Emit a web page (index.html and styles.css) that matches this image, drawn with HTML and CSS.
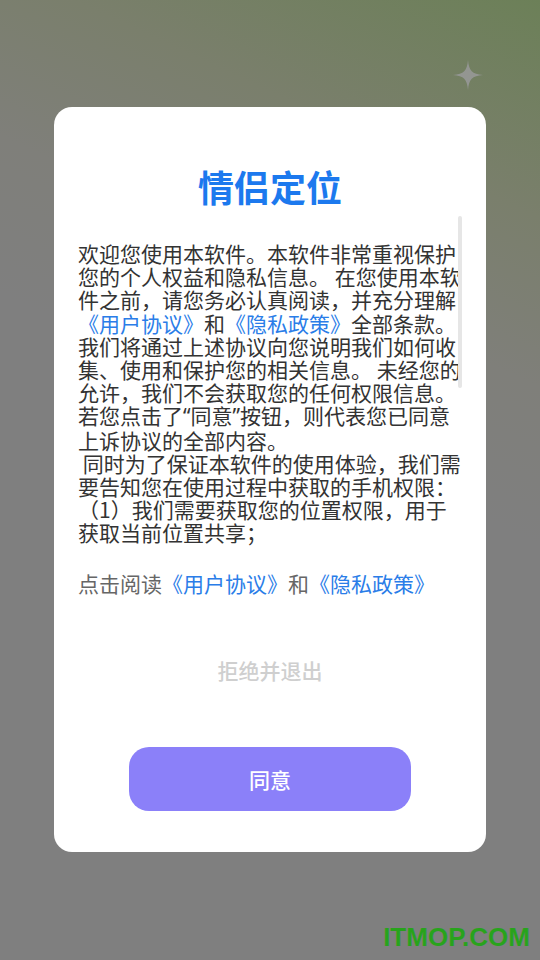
FILE: index.html
```html
<!DOCTYPE html>
<html lang="zh-CN">
<head>
    <meta charset="UTF-8">
    <meta name="viewport" content="width=device-width, initial-scale=1.0">
    <title>情侣定位</title>
    <link rel="stylesheet" href="styles.css">
</head>
<body>
    <div class="bg-star">
        <svg width="30" height="30" viewBox="0 0 30 30"><path d="M15 0 C16 11 19 14 30 15 C19 16 16 19 15 30 C14 19 11 16 0 15 C11 14 14 11 15 0 Z" fill="#9b9b9e" opacity="0.8"/></svg>
    </div>

    <div class="dialog">
        <h2 class="dialog-title">情侣定位</h2>

        <div class="policy-box">
            <div class="policy-text">欢迎您使用本软件。本软件非常重视保护您的个人权益和隐私信息。 在您使用本软件之前，请您务必认真阅读，并充分理解<a class="link">《用户协议》</a>和<a class="link">《隐私政策》</a>全部条款。我们将通过上述协议向您说明我们如何收集、使用和保护您的相关信息。 未经您的允许，我们不会获取您的任何权限信息。若您点击了<span class="quote">“</span>同意<span class="quote">”</span>按钮，则代表您已同意上诉协议的全部内容。<br>&nbsp;同时为了保证本软件的使用体验，我们需要告知您在使用过程中获取的手机权限：<br>（1）我们需要获取您的位置权限，用于获取当前位置共享；</div>
            <div class="scroll-thumb"></div>
        </div>

        <p class="read-line">点击阅读<a class="link">《用户协议》</a>和<a class="link">《隐私政策》</a></p>

        <button class="btn-reject">拒绝并退出</button>
        <button class="btn-agree">同意</button>
    </div>

    <div class="watermark">ITMOP.COM</div>
</body>
</html>
```

FILE: styles.css
```css
html, body { margin: 0; height: 960px; overflow: hidden; }
body {
    position: relative;
    box-sizing: border-box;
    padding: 107px 54px 0;
    font-family: "Noto Sans CJK SC", "Noto Sans", sans-serif;
    background: linear-gradient(205deg, #6c8058 0%, #7a7f6c 18%, #7f7f7a 32%, #7f7f7f 45%);
}

.bg-star { position: absolute; top: 60px; left: 453px; }

.dialog {
    background: #fff;
    border-radius: 18px;
    padding: 59px 24px 41px;
    display: flex;
    flex-direction: column;
    align-items: center;
}

.dialog-title {
    margin: 0;
    font-size: 36px;
    line-height: 40px;
    font-weight: bold;
    color: #1c79ee;
}

.policy-box {
    position: relative;
    align-self: stretch;
    margin-top: 10px;
    height: 332px;
    overflow: hidden;
}
.policy-text {
    padding-top: 26px;
    font-size: 21px;
    line-height: 23.2px;
    color: #333;
}
.quote { font-family: "Noto Sans", sans-serif; }
.scroll-thumb {
    position: absolute;
    top: 0;
    right: 0;
    width: 4px;
    height: 172px;
    border-radius: 2px;
    background: #e6e6e6;
}

.link { color: #2a7de8; text-decoration: none; }

.read-line {
    align-self: stretch;
    margin: 23px 0 0;
    font-size: 21px;
    line-height: 24px;
    color: #666;
}

.btn-reject {
    margin-top: 51px;
    height: 48px;
    padding: 0 20px;
    border: none;
    background: none;
    font-family: inherit;
    font-size: 21px;
    font-weight: 500;
    color: #cfcfcf;
}

.btn-agree {
    margin-top: 53px;
    width: 282px;
    height: 64px;
    border: none;
    border-radius: 20px;
    background: #8b80f9;
    font-family: inherit;
    font-size: 21px;
    font-weight: 500;
    color: #fff;
}

.watermark {
    position: absolute;
    right: 10px;
    bottom: 10px;
    font-family: "Liberation Sans", Arial, sans-serif;
    font-size: 26px;
    line-height: 26px;
    font-weight: bold;
    color: #28a31c;
}
```
